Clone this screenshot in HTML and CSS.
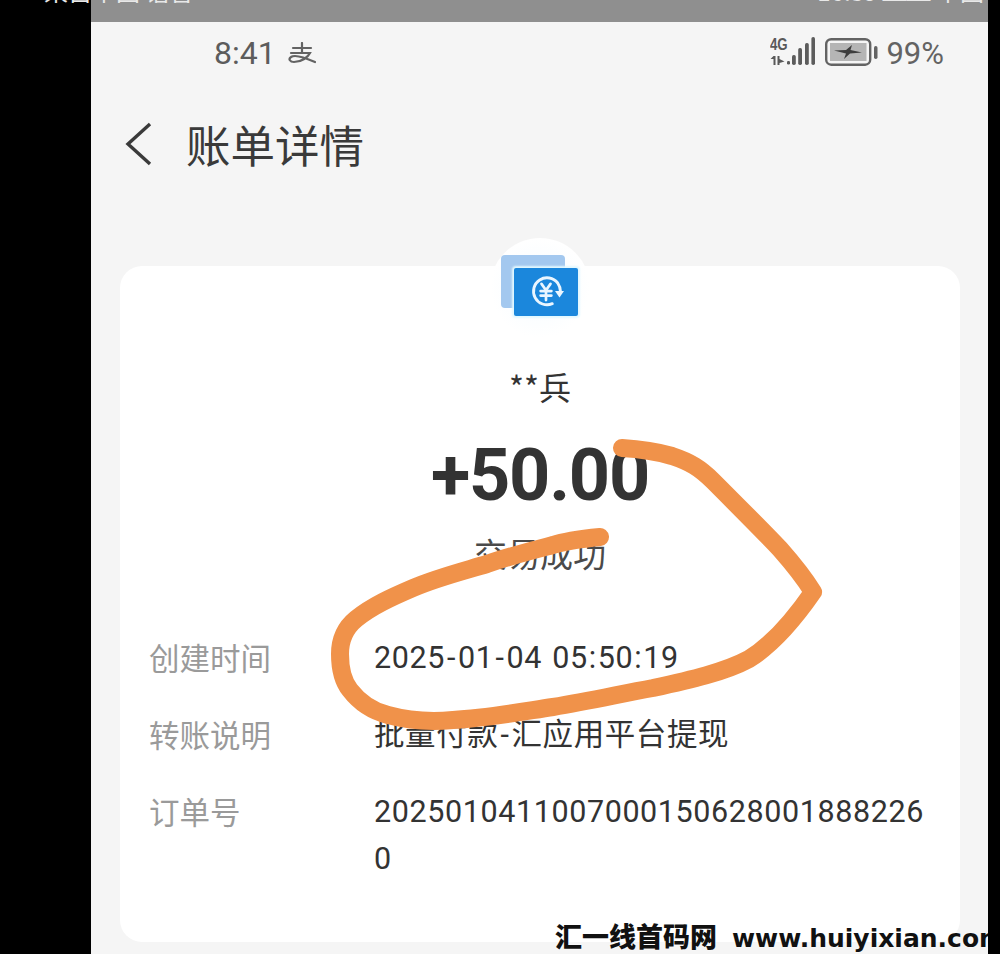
FILE: index.html
```html
<!DOCTYPE html>
<html lang="zh-CN">
<head>
    <meta charset="UTF-8">
    <meta name="viewport" content="width=device-width, initial-scale=1.0">
    <title>账单详情</title>
    <link rel="stylesheet" href="styles.css">
</head>
<body>
    <div class="screen">
        <div class="cut-text">
            <span class="cut-left">来自中国 语音 ▪</span>
            <span class="cut-right">16:39 ▬▬ 中国</span>
        </div>

        <div class="phone">
            <div class="top-strip"></div>

            <div class="status-bar">
                <div class="status-left">
                    <span class="clock">8:41</span>
                    <svg class="pay-icon" viewBox="0 0 28 22" fill="none" stroke="#636363" stroke-width="2.2" stroke-linecap="round">
                        <path d="M5 6H23"/>
                        <path d="M14 1V10"/>
                        <path d="M3 11H22C20 15 14 20 6 20C2 20 0 17 3 15C7 12 18 16 27 20"/>
                    </svg>
                </div>
                <div class="status-right">
                    <div class="net">
                        <span class="net-type">4G</span>
                        <svg class="net-arrows" viewBox="0 0 16 9" fill="#595959">
                            <path d="M0 3L3 0H5V9H3V3H0Z"/>
                            <path d="M7 0H9V3L14 5.5L9 7V9H7Z"/>
                        </svg>
                    </div>
                    <svg class="signal" viewBox="0 0 28 28" fill="#5c5c5c">
                        <rect x="0" y="24" width="3" height="3.5" rx="1.2"/>
                        <rect x="5" y="18" width="3.8" height="10" rx="1.7"/>
                        <rect x="11.2" y="11" width="3.8" height="17" rx="1.7"/>
                        <rect x="18" y="6" width="3.8" height="22" rx="1.7"/>
                        <rect x="24.4" y="0" width="3.6" height="28" rx="1.7"/>
                    </svg>
                    <svg class="battery" viewBox="0 0 53 28">
                        <rect x="1.2" y="1.2" width="44" height="25.5" rx="5" fill="none" stroke="#636363" stroke-width="2.4"/>
                        <rect x="5" y="5" width="36.5" height="18" fill="#b5b5b5"/>
                        <rect x="49" y="8" width="3.5" height="13" rx="1.7" fill="#636363"/>
                        <path d="M9 12.5L21 12L27 7L25.5 12L37 14.5L25 15.5L19 21L21 15.5Z" fill="#3d3d3d"/>
                    </svg>
                    <span class="percent">99%</span>
                </div>
            </div>

            <div class="title-bar">
                <svg class="back" viewBox="0 0 27 44" fill="none" stroke="#3a3a3a" stroke-width="3.4">
                    <path d="M25 2L3 22L25 42"/>
                </svg>
                <h1>账单详情</h1>
            </div>

            <div class="card">
                <div class="bill-icon">
                    <div class="sheet-back"></div>
                    <div class="sheet-front">
                        <svg viewBox="0 0 40 40" fill="none" stroke="#eaf6ff" stroke-linecap="round">
                            <path d="M27 33A15 15 0 1 1 33 10C35 13 36 16 36 19" stroke-width="3.2"/>
                            <path d="M30 19H40L35 26Z" fill="#eaf6ff" stroke="none"/>
                            <path d="M15 11L20 18L25 11M20 18V29M14 19H26M14 24H26" stroke-width="3"/>
                        </svg>
                    </div>
                </div>

                <div class="payer">**兵</div>
                <div class="amount">+50.00</div>
                <div class="state">交易成功</div>

                <div class="details">
                    <div class="label">创建时间</div>
                    <div class="value date">2025<span class="dash">-</span>01<span class="dash">-</span>04 05<span class="colon">:</span>50<span class="colon">:</span>19</div>
                    <div class="label">转账说明</div>
                    <div class="value">批量付款<span class="dash">-</span>汇应用平台提现</div>
                    <div class="label">订单号</div>
                    <div class="value">20250104110070001506280018882260</div>
                </div>
            </div>
        </div>

        <svg class="scribble" viewBox="0 0 1000 954" fill="none" stroke="#f0924a" stroke-width="18" stroke-linecap="round" stroke-linejoin="round">
            <path d="M600 537C580 539 565 541 553 545C530 551 510 556 487 564C460 572 436 578 413 588C392 597 372 606 356 619C345 628 340 640 340 654C340 668 342 680 350 690C360 703 372 711 388 715C410 721 432 722 453 720C488 718 520 712 553 707C590 701 620 694 653 688C690 680 725 672 749 659C772 645 795 618 813 592C805 579 795 566 780 549C760 528 735 503 713 481C700 468 690 462 672 456C655 451 640 449 622 448"/>
        </svg>

        <div class="watermark">汇一线首码网<span class="site">www.huiyixian.com</span></div>
    </div>
</body>
</html>
```

FILE: styles.css
```css
html, body {
    margin: 0;
    padding: 0;
}
body {
    background: #000;
    font-family: "Noto Sans CJK SC", "Noto Sans", sans-serif;
}
.screen {
    position: relative;
    width: 1000px;
    height: 954px;
    overflow: hidden;
    background: #000;
}
.phone {
    width: 897px;
    height: 954px;
    margin-left: 91px;
    overflow: hidden;
    background: #f5f5f5;
}
.top-strip {
    height: 22px;
    background: #8f8f8f;
}

/* clipped line of the photo behind, only the bottoms of the letters show */
.cut-text {
    position: absolute;
    top: 0;
    left: 0;
    z-index: 2;
    display: flex;
    justify-content: space-between;
    width: 988px;
    height: 3px;
    overflow: hidden;
    color: #e8e8e8;
    font-size: 24px;
    line-height: 4px;
}
.cut-left {
    margin-left: 44px;
    transform: translateY(-11px);
}
.cut-right {
    margin-right: 4px;
    transform: translateY(-11px);
}

.status-bar {
    display: flex;
    justify-content: space-between;
    align-items: center;
    height: 62px;
    padding: 0 44px 0 123px;
}
.status-left, .status-right {
    display: flex;
    align-items: center;
}
.clock {
    color: #5c5c5c;
    font-family: Roboto, sans-serif;
    font-size: 32px;
}
.pay-icon {
    width: 28px;
    height: 22px;
    margin-left: 12px;
}
.net {
    display: flex;
    flex-direction: column;
    width: 17px;
    margin-bottom: 4px;
}
.net-type {
    height: 19px;
    color: #595959;
    font-family: "Liberation Sans", sans-serif;
    font-size: 17px;
    font-weight: bold;
    line-height: 15px;
    transform: scaleX(0.78);
    transform-origin: left;
}
.net-arrows {
    width: 17px;
    height: 9px;
}
.signal {
    width: 28px;
    height: 28px;
    margin-bottom: 4px;
}
.battery {
    width: 53px;
    height: 28px;
    margin: 0 0 3px 10px;
}
.percent {
    margin-left: 8px;
    color: #636363;
    font-family: Roboto, sans-serif;
    font-size: 31px;
}

.title-bar {
    display: flex;
    align-items: center;
    height: 76px;
    padding: 22px 0 0 34px;
}
.back {
    width: 27px;
    height: 44px;
}
h1 {
    margin: 0 0 0 34px;
    color: #3a3a3a;
    font-size: 44.5px;
    font-weight: 400;
    line-height: 60px;
}

.card {
    width: 840px;
    height: 676px;
    margin: 84px 0 0 29px;
    border-radius: 22px;
    background: #fff;
    text-align: center;
}
.bill-icon {
    position: relative;
    top: -28px;
    width: 100px;
    height: 100px;
    margin: 0 auto -2px;
    border-radius: 50%;
    background: radial-gradient(circle, #f5fbff 0, #fff 70%);
}
.sheet-back {
    position: absolute;
    top: 17px;
    left: 11px;
    width: 64px;
    height: 53px;
    border-radius: 4px;
    background: #a3c8ef;
}
.sheet-front {
    position: absolute;
    top: 30px;
    left: 24px;
    width: 64px;
    height: 48px;
    border-radius: 2px;
    background: #1b87dc;
    box-shadow: 0 0 2px 2px #e2f8ff;
}
.sheet-front svg {
    display: block;
    width: 36px;
    height: 36px;
    margin: 6px 0 0 14px;
}
.payer {
    color: #333;
    font-size: 32px;
    line-height: 44px;
}
.amount {
    margin-top: 23px;
    color: #333;
    font-family: Roboto, sans-serif;
    font-size: 72px;
    font-weight: 700;
    line-height: 90px;
    letter-spacing: -1.2px;
}
.state {
    margin-top: 8px;
    color: #4a4a4a;
    font-size: 33px;
    line-height: 48px;
}
.details {
    display: grid;
    grid-template-columns: 225px 550px;
    row-gap: 30px;
    margin: 57px 0 0 29px;
    text-align: left;
    font-size: 30.5px;
    line-height: 47px;
}
.label {
    color: #9a9a9a;
}
.value {
    color: #333;
    font-family: Roboto, "Noto Sans CJK SC", sans-serif;
    letter-spacing: 0.6px;
    word-break: break-all;
}
.date {
    word-spacing: 2px;
}
.dash {
    padding: 0 2px;
}
.colon {
    padding: 0 1px;
}

.scribble {
    position: absolute;
    top: 0;
    left: 0;
    width: 1000px;
    height: 954px;
}
.watermark {
    position: absolute;
    top: 918px;
    left: 555px;
    width: 433px;
    overflow: hidden;
    color: #111;
    font-size: 27px;
    font-weight: 900;
    line-height: 36px;
    white-space: nowrap;
    text-shadow: 0 0 2px #fff;
}
.site {
    margin-left: 15px;
    font-family: "DejaVu Sans", sans-serif;
    font-size: 25px;
    font-weight: bold;
}
```
